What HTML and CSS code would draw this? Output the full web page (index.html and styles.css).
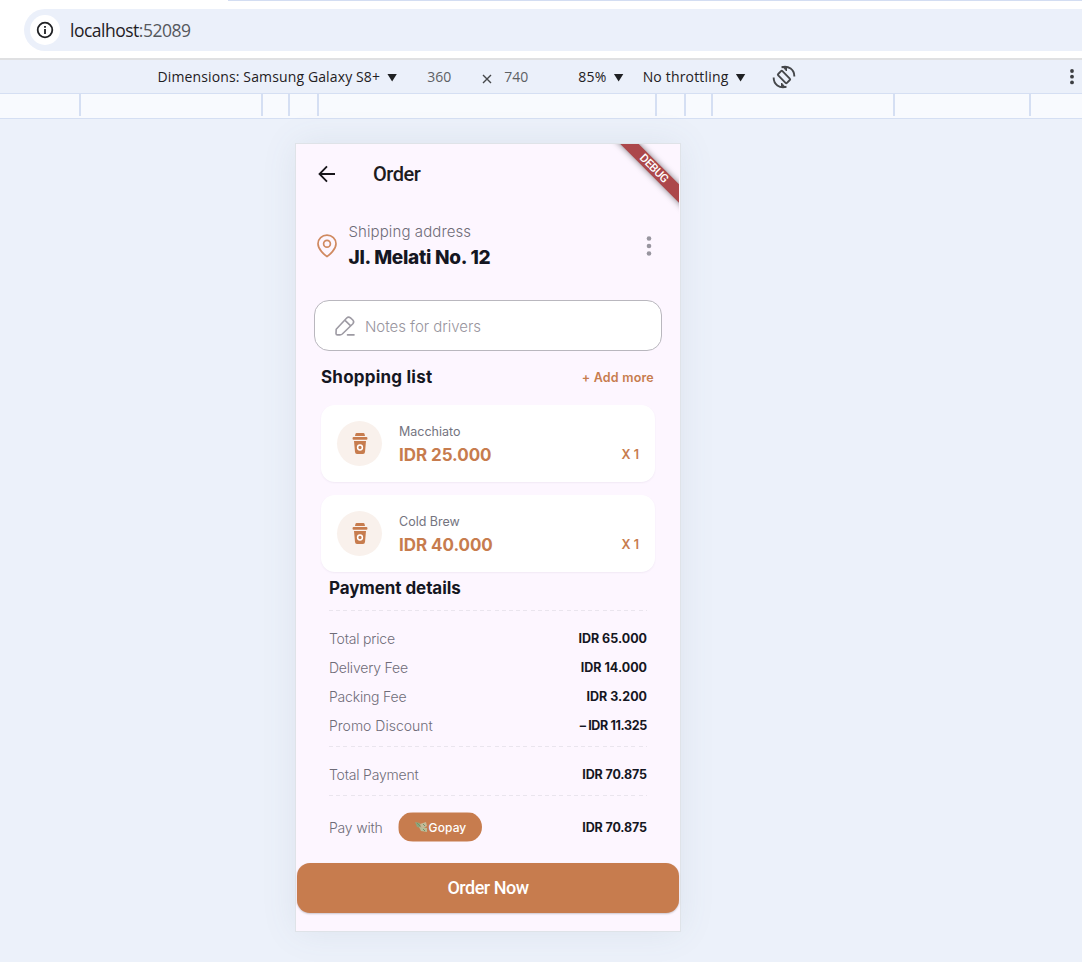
FILE: index.html
```html
<!DOCTYPE html>
<html lang="en">
<head>
<meta charset="utf-8">
<title>Order</title>
<link rel="stylesheet" href="styles.css">
</head>
<body>
<header class="address-bar">
  <div class="omnibox">
    <span class="info"><svg width="18" height="18" viewBox="0 0 18 18" fill="none" stroke="#1f2023" stroke-width="1.8"><circle cx="9" cy="9" r="7.3"/><path d="M9 8v5M9 5v1.8"/></svg></span>
    <span class="url"><span class="t host">localhost</span><span class="t port">:52089</span></span>
  </div>
</header>
<nav class="device-bar">
  <span class="t dims">Dimensions: Samsung Galaxy S8+</span><i class="caret"></i>
  <span class="t size w">360</span><span class="times"><svg width="10" height="10" viewBox="0 0 10 10" stroke="#45474a" stroke-width="1.4"><path d="M1 1l8 8M9 1l-8 8"/></svg></span><span class="t size h">740</span>
  <span class="t zoom">85%</span><i class="caret"></i>
  <span class="t throttle">No throttling</span><i class="caret"></i>
  <svg class="rotate" width="24" height="24" viewBox="0 0 24 24" fill="none" stroke="#45474a" stroke-width="1.9"><rect x="9" y="5.8" width="6" height="12.4" rx="1" transform="rotate(-45 12 12)"/><path d="M9.500 2.300C16.500 0 22.600 5 22.300 11.500M14.500 21.700C7.500 24 1.400 19 1.700 12.500"/><path d="M10.500 1.500L14.500 6V2.500ZM13.500 22.500L9.500 18V21.500Z" fill="#45474a" stroke-width="1"/></svg>
  <svg class="more" width="6" height="18" viewBox="0 0 6 18" fill="#3c3e42"><circle cx="3" cy="3" r="1.9"/><circle cx="3" cy="8.700" r="1.900"/><circle cx="3" cy="14.400" r="1.900"/></svg>
</nav>
<div class="ruler"><i></i><i></i><i></i><i></i><i></i><i></i><i></i><i></i><i></i></div>
<main class="stage">
  <section class="phone">
    <div class="app-bar">
      <svg width="18" height="18" viewBox="0 0 18 18" fill="none" stroke="#17151a" stroke-width="1.800"><path d="M17 9H1.800M9 1.300L1.500 9L9 16.700"/></svg>
      <h1 class="t">Order</h1>
    </div>
    <div class="ribbon-clip"><div class="ribbon"><span class="t">DEBUG</span></div></div>
    <div class="address">
      <svg width="20" height="24" viewBox="0 0 20 24" fill="none" stroke="#d08a61" stroke-width="1.700"><path d="M10 22.500C7.500 21 1 15.300 1 9.700C1 4.700 5 1.200 10 1.200S19 4.700 19 9.700C19 15.300 12.500 21 10 22.500Z"/><circle cx="10" cy="9.700" r="3.400"/></svg>
      <div class="address-text"><p class="t ship">Shipping address</p><p class="t street">Jl. Melati No. 12</p></div>
      <svg class="kebab" width="6" height="20" viewBox="0 0 6 20" fill="#98959f"><circle cx="3" cy="2.500" r="2.300"/><circle cx="3" cy="10" r="2.300"/><circle cx="3" cy="17.500" r="2.300"/></svg>
    </div>
    <div class="notes">
      <svg width="22" height="22" viewBox="0 0 22 22" fill="none" stroke="#9d9aa3" stroke-width="1.600" stroke-linejoin="round" stroke-linecap="round"><path d="M2 18.500L2.200 14.300L12.700 3Q14.500 1.200 16.500 2.900L18.800 5Q20.500 6.800 18.900 8.700L8.300 19Q7.300 19.900 6 19.900H3.500Q2 19.900 2 18.500ZM10.800 5.100L16.700 10.800M13.500 19.900H20"/></svg>
      <span class="t">Notes for drivers</span>
    </div>
    <div class="list-head"><h2 class="t">Shopping list</h2><span class="t">+ Add more</span></div>
    <div class="items">
      <article class="item">
        <span class="cup"><svg width="16" height="22" viewBox="0 0 16 22" fill="#c77c4e"><path d="M3.500.7Q3.800 0 4.500 0h7q.7 0 1 .7L13 3H3ZM1.500 4h13q.9 0 .9 1v1q0 .8-.9.800h-13q-.9 0-.9-.8V5q0-1 .9-1ZM2 8h12l-1 11q-.2 2-2 2H5q-1.800 0-2-2Z"/><circle cx="8" cy="14.500" r="2.400" fill="none" stroke="#fff" stroke-width="1.500"/></svg></span>
        <div><p class="t name">Macchiato</p><p class="t price">IDR 25.000</p></div><span class="t qty">X 1</span>
      </article>
      <article class="item">
        <span class="cup"><svg width="16" height="22" viewBox="0 0 16 22" fill="#c77c4e"><path d="M3.500.7Q3.800 0 4.500 0h7q.7 0 1 .7L13 3H3ZM1.500 4h13q.9 0 .9 1v1q0 .8-.9.800h-13q-.9 0-.9-.8V5q0-1 .9-1ZM2 8h12l-1 11q-.2 2-2 2H5q-1.800 0-2-2Z"/><circle cx="8" cy="14.500" r="2.400" fill="none" stroke="#fff" stroke-width="1.500"/></svg></span>
        <div><p class="t name">Cold Brew</p><p class="t price">IDR 40.000</p></div><span class="t qty">X 1</span>
      </article>
    </div>
    <div class="payment">
      <h2 class="t">Payment details</h2>
      <hr>
      <dl class="fees">
        <div><dt class="t">Total price</dt><dd class="t">IDR 65.000</dd></div>
        <div><dt class="t">Delivery Fee</dt><dd class="t">IDR 14.000</dd></div>
        <div><dt class="t">Packing Fee</dt><dd class="t">IDR 3.200</dd></div>
        <div><dt class="t promo">Promo Discount</dt><dd class="t discount">– IDR 11.325</dd></div>
      </dl>
      <hr>
      <dl class="total"><div><dt class="t">Total Payment</dt><dd class="t sum">IDR 70.875</dd></div></dl>
      <hr>
      <div class="pay"><span class="t with">Pay with</span>
        <span class="gopay"><svg width="13" height="12" viewBox="0 0 13 12"><path d="M0 1l5 1 1 5-4-1z" fill="#8fa57c"/><path d="M5 3l6-2 1 4-5 3z" fill="#c5ba98"/><path d="M4 6l8 1v4l-6-1z" fill="#b9bc98"/><path d="M2 2l3 3M8 3l2 2M8 8l2 2" stroke="#6f9469"/></svg><b class="t">Gopay</b></span>
        <span class="t sum">IDR 70.875</span></div>
    </div>
    <button class="order"><span class="t">Order Now</span></button>
  </section>
</main>
</body>
</html>
```
FILE: styles.css
```css
* { box-sizing: border-box; margin: 0; padding: 0; }
body { width: 1082px; height: 962px; overflow: hidden; background: #ecf1fa; font-family: "Open Sans", sans-serif; color: #1f2023; }
svg { display: block; flex: none; }
.t { white-space: nowrap; }

.address-bar { height: 60px; padding: 9px 0 0 24px; background: linear-gradient(#d3ddf2, #d3ddf2) 228px 0 / 100% 1px no-repeat #fff; border-bottom: 2px solid #dfe0e2; }
.omnibox { display: flex; align-items: center; height: 42px; padding-left: 6px; background: #ebf0fa; border-radius: 21px 0 0 21px; }
.info { display: grid; place-items: center; width: 30px; height: 30px; border-radius: 50%; background: #fff; }
.url { margin-left: 10px; font-size: 17.5px; letter-spacing: -.5px; }
.port { color: #55585d; }

.device-bar { display: flex; align-items: center; height: 33px; padding-left: 157.5px; font-size: 14px; background: #ebf0fa; }
.caret { width: 10px; height: 8px; margin: 2px 0 0 7px; background: #1f2023; clip-path: polygon(0 0, 100% 0, 50% 100%); }
.dims { letter-spacing: .13px; }
.size { color: #5d6064; }
.w { margin-left: 30px; width: 55px; }
.times { width: 22px; padding-top: 5px; }
.h { width: 74px; }
.zoom { letter-spacing: .3px; }
.throttle { margin-left: 19px; letter-spacing: .18px; }
.rotate { margin-left: 26px; }
.more { margin-left: auto; margin-right: 7px; }

.ruler { display: grid; grid-template-columns: 79px 182px 27px 29px 338px 29px 27px 182px 136px; height: 26px; padding-bottom: 2px; background: #f8fafe; border: solid #d5dff3; border-width: 1px 0; }
.ruler i { width: 2px; margin-left: 100%; background: #d5dff3; }

.stage { display: flex; justify-content: center; height: 843px; padding: 25px 106px 0 0; }
.phone { position: relative; width: 384px; height: 787px; background: #fdf6ff; box-shadow: 0 0 0 1px #dfe3e8, 0 0 34px rgba(90, 110, 130, .1); }
.app-bar { display: flex; align-items: center; gap: 37px; height: 60px; padding-left: 22px; }
.app-bar h1 { font: 500 20px Roboto, sans-serif; letter-spacing: -.5px; color: #1d1b20; }
.ribbon-clip { position: absolute; top: 0; right: 1px; width: 90px; height: 90px; overflow: hidden; }
.ribbon { position: absolute; left: 0; top: 18px; width: 130px; height: 13px; display: grid; place-items: center; background: #ac474b; box-shadow: 0 0 6px rgba(0, 0, 0, .5); transform: rotate(45deg); color: #fff; font: 500 11.5px/13px Roboto, sans-serif; letter-spacing: -.3px; }

.address { display: flex; align-items: center; height: 84px; padding: 0 28px 0 21px; }
.address-text { margin-left: 11.5px; }
.ship { font: 300 15px/24px Inter, sans-serif; letter-spacing: .1px; color: #6f6c78; }
.street { font: 800 19px/28px Inter, sans-serif; letter-spacing: -.25px; color: #151622; }
.kebab { margin-left: auto; }
.notes { display: flex; align-items: center; gap: 9px; width: 348px; height: 51px; margin: 12px 0 0 18px; padding-left: 19px; background: #fff; border: 1px solid #b9b7be; border-radius: 15px; font: 300 15px Inter, sans-serif; letter-spacing: -.03px; color: #98959e; }
.notes span { padding-top: 2px; }
.list-head { display: flex; align-items: center; justify-content: space-between; height: 54px; padding: 0 26px 0 25px; }
.list-head h2, .payment h2 { font: 700 17px/24px Inter, sans-serif; letter-spacing: -.08px; color: #151622; }
.list-head h2 { padding-bottom: 2px; letter-spacing: .22px; }
.list-head span { padding-bottom: 1px; font: 600 12.500px Inter, sans-serif; letter-spacing: .22px; color: #c77c4e; }
.items { display: grid; gap: 13px; padding: 0 25px; }
.item { display: flex; height: 77px; padding: 0 16px; background: #fff; border-radius: 14px; box-shadow: 0 1px 2px rgba(90, 70, 110, .07); }
.cup { display: grid; place-items: center; width: 45px; height: 45px; margin: 16px 17px 0 0; border-radius: 50%; background: #f9f1ec; }
.item div { padding-top: 15px; }
.name { font: 400 12.500px/23px Inter, sans-serif; color: #747480; }
.price { font: 700 17px/24px Inter, sans-serif; letter-spacing: -.05px; color: #c77c4e; }
.qty { margin: 39px 0 0 auto; font: 600 12.500px/21px Inter, sans-serif; color: #c77c4e; }
.payment { padding: 4px 33px 0; }
hr { height: 1px; border: 0; background: repeating-linear-gradient(90deg, #eae5ee 0 4px, transparent 4px 7.200px); }
.payment h2 { margin-bottom: 10px; }
.fees { padding: 12.5px 0 5.5px; }
dl div { display: flex; justify-content: space-between; align-items: center; height: 29.200px; }
dt, .with { font: 300 14px Inter, sans-serif; letter-spacing: -.2px; color: #6f6c78; }
.promo { letter-spacing: 0; }
dd, .sum { font: 700 12.500px Inter, sans-serif; color: #151622; }
.discount { letter-spacing: -.35px; }
.sum { letter-spacing: -.12px; margin-left: auto; }
.total { padding: 13px 0 6px; }
.pay { display: flex; align-items: center; height: 63px; }
.gopay { display: flex; align-items: center; justify-content: center; gap: 1px; width: 84px; height: 30px; margin-left: 16px; background: #c77c4e; border-radius: 15px; clip-path: inset(0 0 1px 0); color: #fff; font: 12px Inter, sans-serif; letter-spacing: .1px; }
.gopay b { font-weight: 500; }
.order { display: block; width: 382px; height: 50px; margin: 4px 0 0 1px; border: 0; border-radius: 13px; background: #c77c4e; color: #fff; font: 500 18px Roboto, sans-serif; letter-spacing: -.5px; box-shadow: 0 1px 2px rgba(0, 0, 0, .2); }
```
